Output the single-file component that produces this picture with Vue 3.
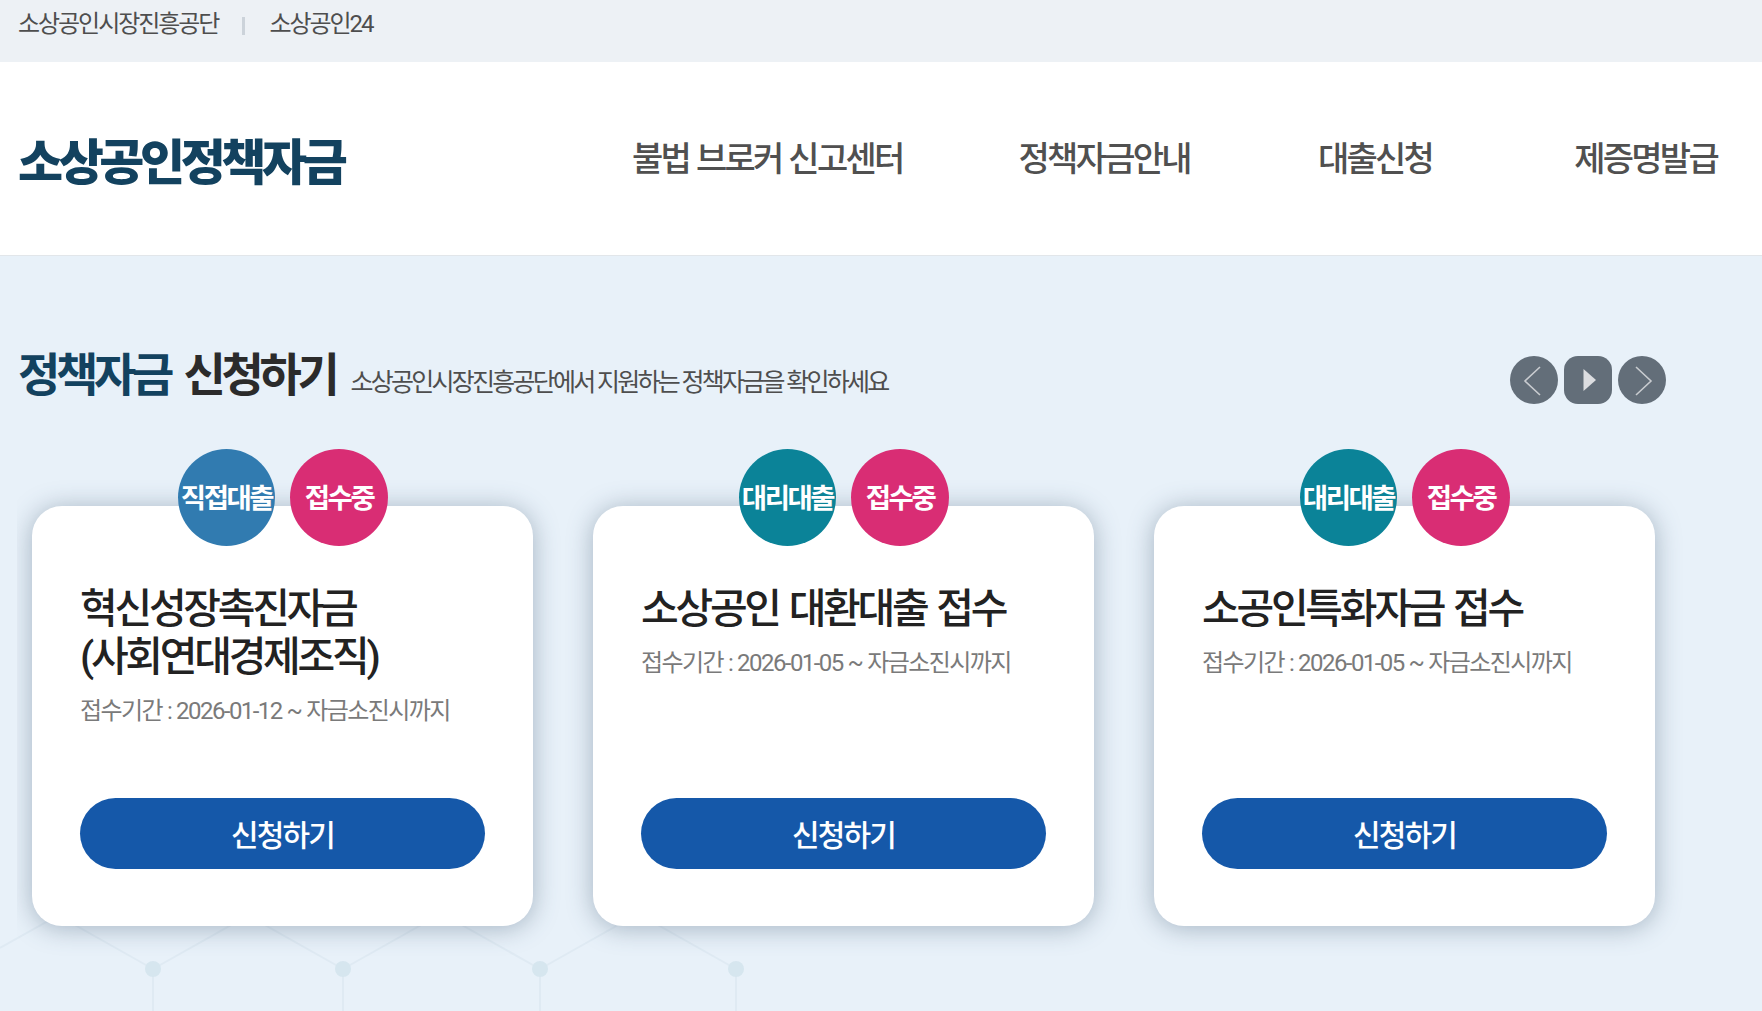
<script setup>
const topLinks = ['소상공인시장진흥공단', '소상공인24']
const menus = ['불법 브로커 신고센터', '정책자금안내', '대출신청', '제증명발급']

const cards = [
  { type: '직접대출', kind: 'direct', title: ['혁신성장촉진자금', '(사회연대경제조직)'], period: '접수기간 : 2026-01-12 ~ 자금소진시까지' },
  { type: '대리대출', kind: 'agent', title: ['소상공인 대환대출 접수'], period: '접수기간 : 2026-01-05 ~ 자금소진시까지' },
  { type: '대리대출', kind: 'agent', title: ['소공인특화자금 접수'], period: '접수기간 : 2026-01-05 ~ 자금소진시까지' },
]

// background circuit lines, the last node only has its left branch
const nodes = [153, 343, 540, 736]
const branch = (x, i) => {
  const left = `M${x} 969L${x - 103} 911`
  const right = i < nodes.length - 1 ? `M${x} 969L${x + 103} 911` : ''
  return `${left}${right}M${x} 969V1011`
}
</script>

<template>
  <div class="page">
    <div class="topbar">
      <template v-for="(link, i) in topLinks" :key="link">
        <span v-if="i > 0" class="sep"></span>
        <a class="top-link">{{ link }}</a>
      </template>
    </div>

    <header class="header">
      <h1 class="logo">소상공인정책자금</h1>
      <nav class="nav">
        <a v-for="m in menus" :key="m" class="nav-item">{{ m }}</a>
      </nav>
    </header>

    <main class="main">
      <svg class="pattern" width="800" height="100" viewBox="0 911 800 100">
        <g stroke="#dfeaf3" stroke-width="2" fill="none">
          <path d="M0 948L66 911" />
          <path v-for="(x, i) in nodes" :key="x" :d="branch(x, i)" />
        </g>
        <circle v-for="x in nodes" :key="'c' + x" :cx="x" cy="969" r="8" fill="#d6e6ef" />
      </svg>

      <div class="section-head">
        <h2 class="section-title"><em>정책자금</em> 신청하기</h2>
        <p class="section-desc">소상공인시장진흥공단에서 지원하는 정책자금을 확인하세요</p>
        <div class="controls">
          <button class="ctl round" aria-label="이전">
            <svg width="48" height="48" viewBox="0 0 48 48"><path d="M30 11L15 25L30 39" fill="none" stroke="#c9ccd0" stroke-width="1.6" /></svg>
          </button>
          <button class="ctl square" aria-label="재생">
            <svg width="48" height="48" viewBox="0 0 48 48"><path d="M19.5 13L32 24L19.5 35Z" fill="#dcdde0" /></svg>
          </button>
          <button class="ctl round" aria-label="다음">
            <svg width="48" height="48" viewBox="0 0 48 48"><path d="M18 11L33 25L18 39" fill="none" stroke="#c9ccd0" stroke-width="1.6" /></svg>
          </button>
        </div>
      </div>

      <div class="cards">
        <article v-for="card in cards" :key="card.title[0]" class="card">
          <div class="badges">
            <span class="badge" :class="card.kind">{{ card.type }}</span>
            <span class="badge open">접수중</span>
          </div>
          <h3 class="card-title">
            <span v-for="line in card.title" :key="line" class="line">{{ line }}</span>
          </h3>
          <p class="period">{{ card.period }}</p>
          <a class="apply">신청하기</a>
        </article>
      </div>
    </main>
  </div>
</template>

<style scoped>
.page {
  width: 1762px;
  height: 1011px;
  overflow: hidden;
  background: #e8f1f9;
  font-family: Roboto, "Noto Sans CJK KR", "Noto Sans", sans-serif;
  color: #222;
}

.topbar {
  height: 62px;
  padding: 8px 0 0 18px;
  box-sizing: border-box;
  display: flex;
  align-items: flex-start;
  background: #edf1f5;
}

.top-link {
  font-size: 24px;
  line-height: 32px;
  letter-spacing: -0.085em;
  color: #4e4e4e;
}

.sep {
  width: 3px;
  height: 18px;
  margin: 9px 24px 0 24px;
  background: #ccd3da;
}

.header {
  height: 194px;
  box-sizing: border-box;
  border-bottom: 1px solid #e2e6ea;
  background: #fff;
  display: flex;
  align-items: center;
  justify-content: space-between;
  padding: 0 45px 4px 18px;
}

.logo {
  margin: 4px 0 0;
  font-size: 49px;
  font-weight: 900;
  letter-spacing: -0.09em;
  color: #13425f;
}

.nav {
  display: flex;
}

.nav-item {
  font-size: 34px;
  font-weight: 500;
  letter-spacing: -0.08em;
  word-spacing: 1px;
  color: #505050;
}

.nav-item:nth-child(2) {
  margin-left: 116px;
}

.nav-item:nth-child(3) {
  margin-left: 128px;
}

.nav-item:nth-child(4) {
  margin-left: 142px;
}

.main {
  position: relative;
  height: 755px;
}

.pattern {
  position: absolute;
  left: 0;
  bottom: 0;
}

.section-head {
  position: relative;
  display: flex;
  align-items: center;
  height: 48px;
  padding: 100px 0 0 18px;
}

.section-title {
  margin: 0 0 18px;
  font-size: 46px;
  font-weight: 700;
  letter-spacing: -0.094em;
  word-spacing: 6.5px;
  color: #2b2b2b;
}

.section-title em {
  font-style: normal;
  color: #13425f;
}

.section-desc {
  margin: 0 0 0 15px;
  font-size: 25px;
  letter-spacing: -0.11em;
  color: #4e4e4e;
}

.controls {
  margin-left: auto;
  margin-right: 96px;
  display: flex;
  gap: 6px;
}

.ctl {
  width: 48px;
  height: 48px;
  padding: 0;
  border: 0;
  background: #636e79;
}

.ctl svg {
  display: block;
}

.round {
  border-radius: 50%;
}

.square {
  border-radius: 14px;
}

.cards {
  position: relative;
  display: flex;
  gap: 60px;
  height: 607px;
  box-sizing: border-box;
  margin-left: 17px;
  padding: 102px 0 0 15px;
  overflow: hidden;
}

.card {
  position: relative;
  width: 501px;
  height: 420px;
  box-sizing: border-box;
  padding: 79px 48px 0;
  display: flex;
  flex-direction: column;
  background: #fff;
  border-radius: 30px;
  box-shadow: 0 2px 26px rgba(60, 85, 110, 0.4);
}

.badges {
  position: absolute;
  top: -57px;
  left: 146px;
  display: flex;
  gap: 15px;
}

.badge {
  width: 97px;
  height: 97px;
  padding-bottom: 4px;
  box-sizing: border-box;
  border-radius: 50%;
  display: flex;
  align-items: center;
  justify-content: center;
  font-size: 27.5px;
  font-weight: 700;
  letter-spacing: -0.09em;
  color: #fff;
  white-space: nowrap;
}

.direct {
  background: #317bb0;
}

.agent {
  background: #0b8398;
}

.open {
  width: 98px;
  background: #d92d74;
}

.card-title {
  margin: 0;
  font-size: 41px;
  line-height: 48px;
  font-weight: 500;
  letter-spacing: -0.08em;
  word-spacing: 3px;
  color: #222;
}

.line {
  display: block;
}

.period {
  margin: 14px 0 0;
  font-size: 24px;
  line-height: 32px;
  letter-spacing: -0.065em;
  word-spacing: 0.5px;
  color: #7a7a7a;
}

.apply {
  margin-top: auto;
  margin-bottom: 57px;
  height: 71px;
  padding-bottom: 2px;
  box-sizing: border-box;
  border-radius: 36px;
  background: #1558a9;
  color: #fff;
  display: flex;
  align-items: center;
  justify-content: center;
  font-size: 30px;
  font-weight: 500;
  letter-spacing: -0.06em;
}
</style>
